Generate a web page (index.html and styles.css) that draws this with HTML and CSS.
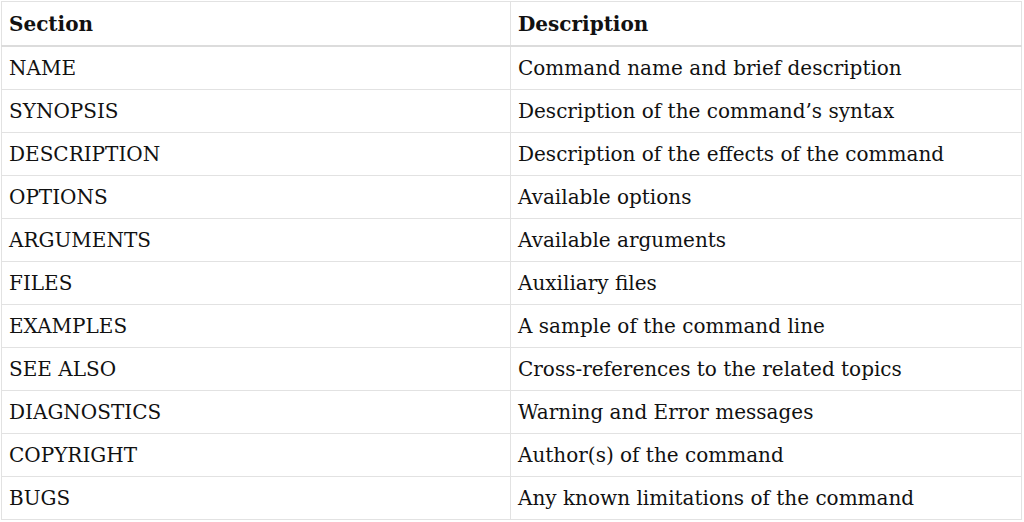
FILE: index.html
```html
<!DOCTYPE html>
<html>
<head>
<meta charset="utf-8">
<link rel="stylesheet" href="styles.css">
</head>
<body>
<table class="man-table">
  <thead>
    <tr><th>Section</th><th>Description</th></tr>
  </thead>
  <tbody>
    <tr><td>NAME</td><td>Command name and brief description</td></tr>
    <tr><td>SYNOPSIS</td><td>Description of the command’s syntax</td></tr>
    <tr><td>DESCRIPTION</td><td>Description of the effects of the command</td></tr>
    <tr><td>OPTIONS</td><td>Available options</td></tr>
    <tr><td>ARGUMENTS</td><td>Available arguments</td></tr>
    <tr><td>FILES</td><td>Auxiliary files</td></tr>
    <tr><td>EXAMPLES</td><td>A sample of the command line</td></tr>
    <tr><td>SEE ALSO</td><td>Cross-references to the related topics</td></tr>
    <tr><td>DIAGNOSTICS</td><td>Warning and Error messages</td></tr>
    <tr><td>COPYRIGHT</td><td>Author(s) of the command</td></tr>
    <tr><td>BUGS</td><td>Any known limitations of the command</td></tr>
  </tbody>
</table>
</body>
</html>
```
FILE: styles.css
```css
html, body {
  margin: 0;
  padding: 0;
  background: #ffffff;
}
body {
  padding: 1px 0 0 1px;
}
.man-table {
  width: 1021px;
  border-collapse: collapse;
  font-family: "DejaVu Serif", "Liberation Serif", serif;
  font-size: 20px;
  color: #111111;
}
.man-table th,
.man-table td {
  border: 1px solid #e2e2e2;
  padding: 0 7px;
  height: 42px;
  text-align: left;
  vertical-align: middle;
}
.man-table th {
  font-weight: bold;
  height: 43px;
  border-bottom: 2px solid #dcdcdc;
}
.man-table th:first-child,
.man-table td:first-child {
  width: 494px;
}
```
